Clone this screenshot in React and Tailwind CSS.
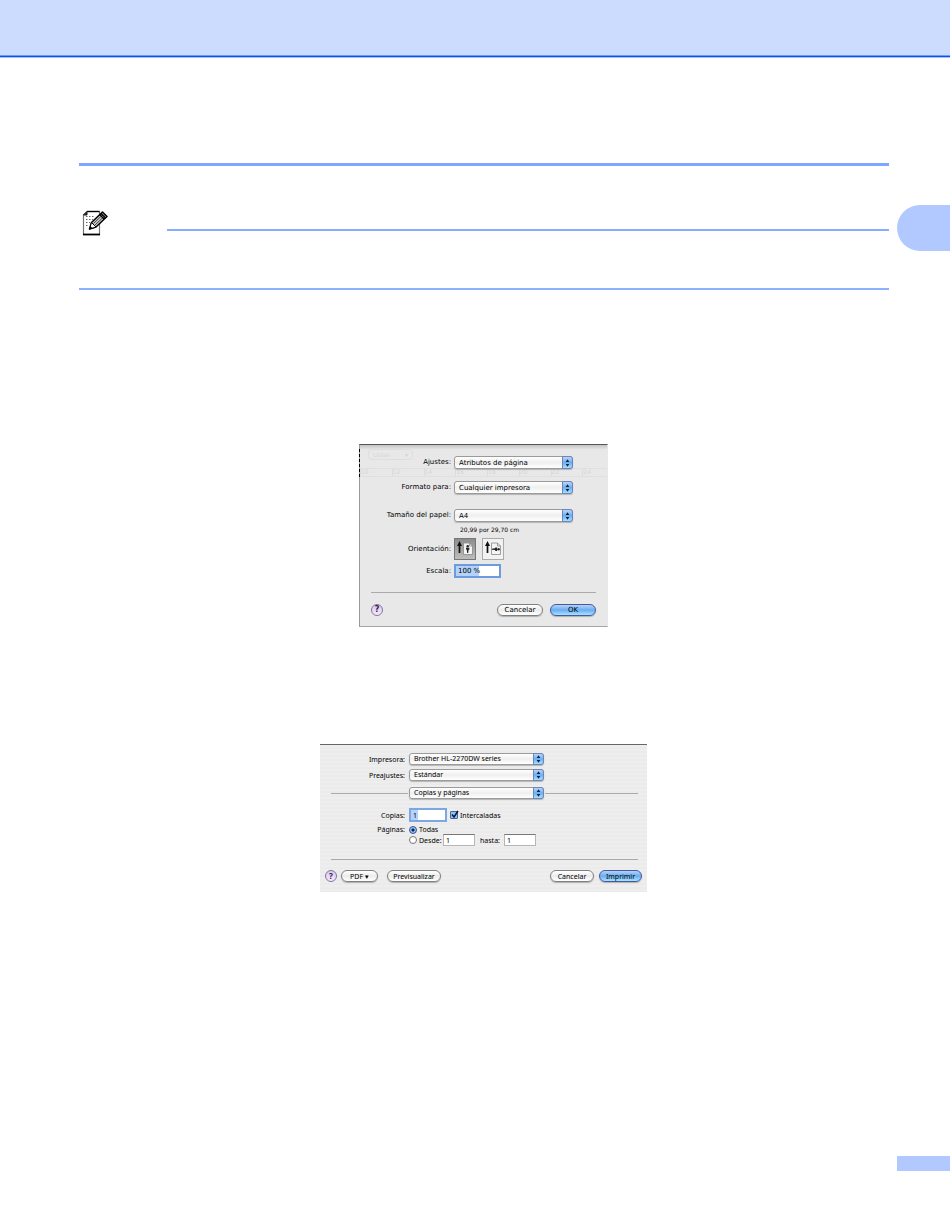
const RULER = [10, 12, 14, 16, 18, 20, 22, 24];

function PopUp({ id, label, value }) {
  return (
    <div className="relative w-full h-full">
      <select
        id={id}
        aria-label={label}
        className="block w-full h-full appearance-none rounded-[3px] border border-[#9a9a9a] bg-linear-to-b from-white via-[#efefef] to-white pl-1 pr-3 leading-[10px] shadow-[0_1px_1px_#b5b5b5]"
      >
        <option>{value}</option>
      </select>
      <span className="pointer-events-none absolute inset-y-0 right-0 flex w-[11px] items-center justify-center rounded-r-[3px] border border-[#6d84c0] bg-linear-to-b from-[#b9d6f6] via-[#6cadf0] to-[#a5e0ff]">
        <svg viewBox="0 0 5 8" className="w-[5px] h-2" fill="#10203c">
          <path d="M2.5 0.3 4.3 3H0.7zM2.5 7.7 4.3 5H0.7z" />
        </svg>
      </span>
    </div>
  );
}

function PushButton({ children, primary, className }) {
  const look = primary
    ? 'border-[#4557a5] bg-linear-to-b from-[#b5d3f7] via-[#6aacf0] to-[#a8e4ff]'
    : 'border-[#808080] bg-linear-to-b from-white via-[#ececec] to-white';
  return (
    <button
      type="button"
      className={`flex h-3 items-center justify-center rounded-full border leading-none shadow-[0_1px_1px_#b0b0b0] ${look} ${className}`}
    >
      {children}
    </button>
  );
}

function HelpButton() {
  return (
    <button
      type="button"
      aria-label="Ayuda"
      className="flex size-3 items-center justify-center rounded-full border border-[#86749c] bg-linear-to-b from-[#d9c8ee] to-[#f5eaff] text-[8px] leading-none font-bold text-[#35204c]"
    >
      ?
    </button>
  );
}

function NoteIcon() {
  return (
    <svg viewBox="0 0 26 26" className="w-[26px] h-[26px]" fill="none">
      <path d="M5 1.5H17.500V24.500H1.500V5z" fill="#fff" stroke="#777" strokeWidth="1.200" />
      <path d="M5 1.500H17.500" stroke="#000" strokeWidth="1.400" />
      <path d="M1.500 5 5 1.500V5z" fill="#222" stroke="#222" />
      <path d="M1 24.500h17" stroke="#000" strokeWidth="1.800" />
      <path d="M4 6.500h9M4 9.500h7M4 12.500h4M4 15.500h3" stroke="#666" strokeDasharray="1.500 1.500" />
      <path d="M7.500 19 9.500 12.500 20.500 2 25 6.500 14 17z" fill="#ccc" stroke="#000" strokeWidth="1.500" strokeLinejoin="round" />
      <path d="M9.500 12.500 14 17 7.500 19z" fill="#fff" stroke="#000" />
      <path d="M11.500 13.500 21.500 4M13 15 23 5.500" stroke="#333" strokeWidth="0.900" />
      <path d="M17.500 4.500 22 9M19 3.500l4.500 4.500" stroke="#000" strokeWidth="1.300" />
      <path d="M7 19.500 10.500 18.500 8.500 16z" fill="#000" />
    </svg>
  );
}

function OrientationIcon({ sideways }) {
  return (
    <svg viewBox="0 0 20 20" className="size-5" fill="none">
      <path d="M4.500 14V5" stroke="#111" strokeWidth="1.700" />
      <path d="M4.500 2 7 7H2z" fill="#111" />
      <path d="M8.500 4H14.500L17.500 7V15.500H8.500z" fill="#f4f4f4" stroke="#888" strokeWidth="0.800" />
      <path d="M14.500 4V7H17.500" stroke="#888" strokeWidth="0.800" />
      <g fill="#222" transform={sideways ? 'rotate(90 12.700 10.200)' : undefined}>
        <circle cx="12.700" cy="7.300" r="1.200" />
        <path d="M11 8.800h3.400v1.700l-.8.300-.4 3.200h-1l-.4-3.200-.8-.3z" />
      </g>
    </svg>
  );
}

function PageSetupDialog() {
  const row = 'grid grid-cols-[91px_119px] gap-x-[3px] items-center';
  return (
    <form className="relative w-[249px] border border-t-[#555] border-r-[#e8e8e8] border-b-[#a5a5a5] border-l-[#999] bg-[#e8e8e8] pt-[11px] pb-[10px] font-['DejaVu_Sans',sans-serif] text-[7px] leading-none">
      {/* window showing faintly through the sheet */}
      <div aria-hidden="true" className="absolute inset-x-0 top-0 h-8 bg-linear-to-b from-[#c4c4c4] via-[#e8e8e8] via-15% to-[#e8e8e8] text-[6px] text-[#d6d6d6]">
        <div className="absolute top-1 left-2 flex h-[11px] w-[45px] items-center justify-between rounded-sm border border-[#dedede] px-1">
          <span>Listas</span>
          <span>▾</span>
        </div>
        <div className="absolute inset-x-0 bottom-0 flex h-[9px] justify-between border-y border-[#dfdfdf] pr-4">
          {RULER.map((n) => (
            <span key={n} className="border-l border-[#dcdcdc]">{n}</span>
          ))}
        </div>
        <div className="absolute top-1 -left-px h-7 border-l border-dashed border-black" />
      </div>

      <div className="relative">
        <div className={`${row} h-[13px]`}>
          <label htmlFor="settings" className="text-right">Ajustes:</label>
          <PopUp id="settings" value="Atributos de página" />
        </div>
        <div className={`${row} mt-3 h-[13px]`}>
          <label htmlFor="format" className="text-right">Formato para:</label>
          <PopUp id="format" value="Cualquier impresora" />
        </div>
        <div className={`${row} mt-[15px] h-[13px]`}>
          <label htmlFor="paper" className="text-right">Tamaño del papel:</label>
          <PopUp id="paper" value="A4" />
        </div>
        <p className="mt-1 h-2 pl-[100px] text-[6px] leading-[8px]">20,99 por 29,70 cm</p>
        <div className={`${row} mt-1 h-[22px]`}>
          <span className="text-right">Orientación:</span>
          <div className="flex gap-1.5">
            <button type="button" aria-label="Vertical" className="flex size-[22px] items-center justify-center border border-[#777] bg-linear-to-b from-[#8d8d8d] to-[#bdbdbd]">
              <OrientationIcon />
            </button>
            <button type="button" aria-label="Horizontal" className="flex size-[22px] items-center justify-center border border-[#aaa] bg-[#f2f2f2]">
              <OrientationIcon sideways />
            </button>
          </div>
        </div>
        <div className={`${row} mt-1 h-[14px]`}>
          <label htmlFor="scale" className="text-right">Escala:</label>
          <input
            id="scale"
            defaultValue="100 %"
            className="h-[14px] w-[47px] border-2 border-[#6d9bdd] bg-white bg-linear-to-r from-[#b4d3fb] from-[23px] to-white to-[23px] pl-0.5 leading-none"
          />
        </div>
        <hr className="mx-[11px] mt-[14px] border-[#aaa]" />
        <div className="mt-[11px] flex items-center gap-[7px] px-[11px]">
          <HelpButton />
          <PushButton className="ml-auto w-[46px]">Cancelar</PushButton>
          <PushButton primary className="w-[46px]">OK</PushButton>
        </div>
      </div>
    </form>
  );
}

function PrintDialog() {
  const row = 'grid grid-cols-[85px_135px_1fr] gap-x-1 items-center';
  const field = 'h-3 w-8 border border-[#b5b5b5] border-t-[#777] bg-white pl-0.5 leading-none';
  const radio = 'size-2 appearance-none rounded-full border border-[#777] bg-white checked:border-[#334d8d] checked:bg-[radial-gradient(#102040_1px,#8cc4fa_2px)]';
  return (
    <form className="w-[327px] border-t border-[#666] bg-[repeating-linear-gradient(#eeeeee_0_2px,#ebebeb_2px_4px)] pt-2 pb-[10px] text-[7px] leading-none">
      <div className={`${row} h-3`}>
        <label htmlFor="printer" className="text-right">Impresora:</label>
        <PopUp id="printer" value="Brother HL-2270DW series" />
      </div>
      <div className={`${row} mt-1 h-3`}>
        <label htmlFor="presets" className="text-right">Preajustes:</label>
        <PopUp id="presets" value="Estándar" />
      </div>
      <div className={`${row} mt-1.5 h-3`}>
        <hr className="-mr-[3px] ml-[11px] border-[#aaa]" />
        <PopUp id="section" label="Sección" value="Copias y páginas" />
        <hr className="mr-[9px] -ml-[3px] border-[#aaa]" />
      </div>

      <div className={`${row} mt-[9px] h-[14px]`}>
        <label htmlFor="copies" className="text-right">Copias:</label>
        <div className="flex items-center gap-[3px]">
          <input
            id="copies"
            defaultValue="1"
            className="h-[14px] w-[38px] border-2 border-[#7da7e2] bg-white bg-linear-to-r from-[#b4d3fb] from-[7px] to-white to-[7px] pl-0.5 leading-none"
          />
          <label className="flex items-center gap-0.5">
            <span className="relative flex">
              <input type="checkbox" defaultChecked className="size-2 appearance-none rounded-[1px] border border-[#48639d] bg-[#8cc4fa]" />
              <svg viewBox="0 0 9 9" className="pointer-events-none absolute bottom-0 left-0 size-[9px]" fill="none">
                <path d="M2 4.500 4 7 8 1" stroke="#0c1530" strokeWidth="1.500" />
              </svg>
            </span>
            Intercaladas
          </label>
        </div>
      </div>
      <div className={`${row} mt-[3px] h-[9px]`}>
        <span className="text-right">Páginas:</span>
        <label className="flex items-center gap-0.5">
          <input type="radio" name="range" defaultChecked className={radio} />
          Todas
        </label>
      </div>
      <div className="flex h-3 items-center pl-[89px]">
        <label className="flex w-[34px] items-center gap-0.5">
          <input type="radio" name="range" className={radio} />
          Desde:
        </label>
        <input aria-label="Desde" defaultValue="1" className={field} />
        <label htmlFor="last" className="w-[29px] pl-[5px]">hasta:</label>
        <input id="last" defaultValue="1" className={field} />
      </div>

      <hr className="mt-[13px] mr-[9px] ml-[11px] border-[#aaa]" />
      <div className="mt-[10px] flex items-center px-[5px]">
        <HelpButton />
        <PushButton className="ml-1 w-[37px]">PDF ▾</PushButton>
        <PushButton className="ml-[9px] w-[54px]">Previsualizar</PushButton>
        <PushButton className="ml-auto w-11">Cancelar</PushButton>
        <PushButton primary className="ml-[5px] w-[43px]">Imprimir</PushButton>
      </div>
    </form>
  );
}

export default function App() {
  return (
    <div className="flex min-h-screen flex-col bg-white font-['Noto_Sans','Open_Sans',sans-serif] text-black">
      <header className="h-[57px] border-b border-[#0c50f0] bg-[#ccdcff] shadow-[0_1px_#a5c0ff,inset_0_-1px_#6f9af8]" />
      <div className="flex flex-1">
        <main className="flex-1 pt-[106px] pr-2 pl-[79px]">
          <hr className="border-0 h-[3px] bg-[#7fa6ff]" />
          <div className="mt-11 flex h-[26px] items-end pl-[3px]">
            <NoteIcon />
            <hr className="mb-[5px] ml-[59px] h-0.5 flex-1 border-0 bg-[#86abff]" />
          </div>
          <hr className="mt-[52px] h-0.5 border-0 bg-[#8db0ff]" />
          <div className="mt-[154px] flex flex-col items-center gap-[117px] pr-px">
            <PageSetupDialog />
            <PrintDialog />
          </div>
        </main>
        <aside className="flex w-[53px] flex-col justify-between pt-[148px] pb-[55px]">
          <div className="h-[46px] rounded-l-full bg-[#b2c9ff]" />
          <div className="h-[15px] bg-[#b2c9ff]" />
        </aside>
      </div>
    </div>
  );
}
